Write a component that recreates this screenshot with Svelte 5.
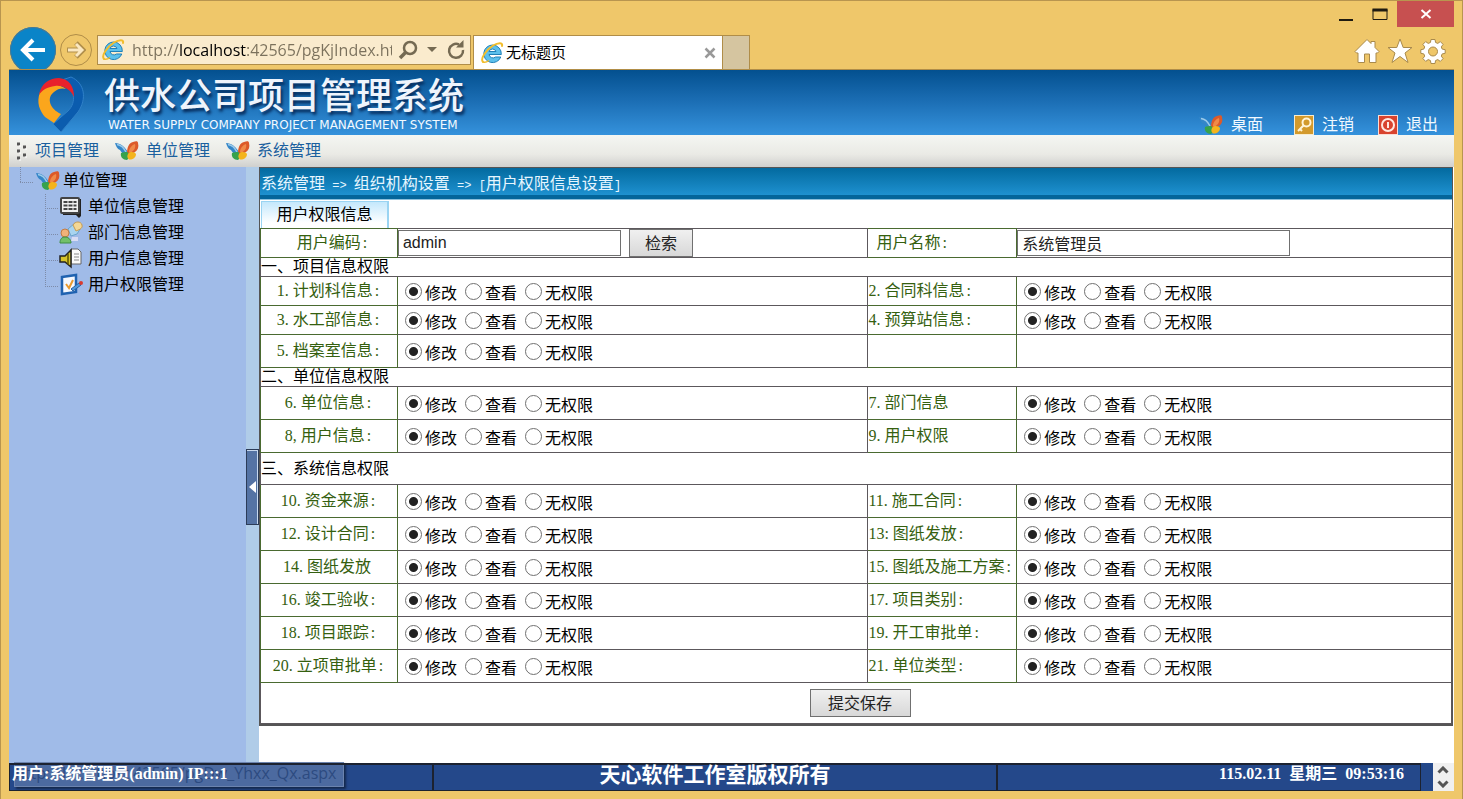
<script>
  const menus = ["项目管理", "单位管理", "系统管理"];

  const treeItems = [
    { icon: "card", text: "单位信息管理" },
    { icon: "people", text: "部门信息管理" },
    { icon: "speaker", text: "用户信息管理" },
    { icon: "edit", text: "用户权限管理" },
  ];

  const levels = ["修改", "查看", "无权限"];

  // each row holds a left and a right permission: [number, label]
  const sections = [
    {
      title: "一、项目信息权限",
      rows: [
        { size: "short", items: [["1.", "计划科信息", ":"], ["2.", "合同科信息", ":"]] },
        { size: "short", items: [["3.", "水工部信息", ":"], ["4.", "预算站信息", ":"]] },
        { size: "tall", items: [["5.", "档案室信息", ":"], null] },
      ],
    },
    {
      title: "二、单位信息权限",
      rows: [
        { size: "tall", items: [["6.", "单位信息", ":"], ["7.", "部门信息", ""]] },
        { size: "tall", items: [["8,", "用户信息", ":"], ["9.", "用户权限", ""]] },
      ],
    },
    {
      title: "三、系统信息权限",
      roomy: true,
      rows: [
        { size: "tall", items: [["10.", "资金来源", ":"], ["11.", "施工合同", ":"]] },
        { size: "tall", items: [["12.", "设计合同", ":"], ["13:", "图纸发放", ":"]] },
        { size: "tall", items: [["14.", "图纸发放", ""], ["15.", "图纸及施工方案", ":"]] },
        { size: "tall", items: [["16.", "竣工验收", ":"], ["17.", "项目类别", ":"]] },
        { size: "tall", items: [["18.", "项目跟踪", ":"], ["19.", "开工审批单", ":"]] },
        { size: "tall", items: [["20.", "立项审批单", ":"], ["21.", "单位类型", ":"]] },
      ],
    },
  ];

  let address = $state("http://localhost:42565/pgKjIndex.htm");
  let userCode = $state("admin");
  let userName = $state("系统管理员");
  let granted = $state({});

  for (const section of sections) {
    for (const row of section.rows) {
      for (const item of row.items) {
        if (item) granted[parseInt(item[0])] = "修改";
      }
    }
  }
</script>

{#snippet ieLogo()}
  <svg class="ie-logo" viewBox="0 0 24 24" aria-hidden="true">
    <path d="M12.500 4a8.800 8.800 0 1 0 8.300 12h-5.300a4 4 0 0 1-6.500-2.500h12.300a8.800 8.800 0 0 0-8.800-9.500zM9 10.500a3.700 3.700 0 0 1 7 0z" fill="#5cc0ec" stroke="#2080b8" stroke-width="1" />
    <path d="M3 21C0 18 6 9 13 4.500C18 1.500 23 1 22 5" fill="none" stroke="#f2bd2c" stroke-width="2" stroke-linecap="round" />
    <path d="M3 21c2 1 4 0 6-1.500" fill="none" stroke="#f2bd2c" stroke-width="1.500" />
  </svg>
{/snippet}

{#snippet butterfly()}
  <svg class="butterfly" viewBox="0 0 24 20" aria-hidden="true">
    <path d="M0 2C5 2 11 6 13 12L11 14C8 13 6 11 5 9C2 8 1 5 0 2z" fill="#3486c8" />
    <path d="M2 3.500C6 4 9 7 11 11" fill="none" stroke="#9ccbea" stroke-width="1.500" />
    <path d="M12 12C12 6 14 2 18 1C21 0 23 0 23 2C24 6 23 9 20 11L14 14z" fill="#dc5a2a" />
    <path d="M14 11C14 7 17 4 20 3C21 7 19 10 15 12z" fill="#f08a48" />
    <path d="M12 11C15 12 15 17 12 19C8 19 5 16 6 12C8 11 10 11 12 11z" fill="#37a24c" />
    <path d="M13 13C15 10 20 11 21 13C21 17 17 19 14 18.500C12 17 12 15 13 13z" fill="#f4b41c" />
  </svg>
{/snippet}

{#snippet treeIcon(name)}
  <svg class="tree-icon" viewBox="0 0 24 24" aria-hidden="true">
    {#if name === "card"}
      <path d="M4 4h18v17l-2 2-3-3H4z" fill="#222" />
      <rect x="2" y="3" width="18" height="15" rx="1" fill="#f0f0f0" stroke="#444" stroke-width="2" />
      <path d="M4.500 7h13M4.500 10.500h13M4.500 14h13" stroke="#444" stroke-width="2" stroke-dasharray="4 1" />
    {:else if name === "people"}
      <path d="M9 8l7-6 7 3-5 8-6 2z" fill="#a8d4f0" stroke="#6aa4cc" />
      <path d="M14 4c2-4 8-4 9 0s-4 5-6 6z" fill="#f3d795" stroke="#c79a50" />
      <path d="M13 16h6v4h-7z" fill="#d8dcf4" />
      <circle cx="6" cy="12" r="4" fill="#f0b27a" stroke="#c27c42" />
      <path d="M1 22c0-4 2-6 5-6s6 2 6 6z" fill="#72c06a" stroke="#3e8e42" />
    {:else if name === "speaker"}
      <path d="M12 2h7l3 3v12H12z" fill="#fafafa" stroke="#666" />
      <path d="M15 7h5M15 10h5M15 13h5" stroke="#888" />
      <path d="M1 9h5l6-6v17l-6-5H1z" fill="#d6c32a" stroke="#222" stroke-width="1.500" />
      <path d="M9 7v11" stroke="#5a5200" stroke-width="1.500" />
    {:else}
      <path d="M3 4l14-2v17L3 21z" fill="#f4f8ff" stroke="#1f62b0" stroke-width="2.500" />
      <path d="M7 11l3 4 4-8" fill="none" stroke="#e89a30" stroke-width="2" />
      <path d="M12 16l8-6 2 2-8 6z" fill="#4f9ae0" stroke="#2860a0" />
      <circle cx="22" cy="10" r="2" fill="#d83a30" />
    {/if}
  </svg>
{/snippet}

{#snippet permission(item)}
  {#if item}
    <div class="choices" role="radiogroup" aria-label={item[1]}>
      {#each levels as level}
        <label class="choice">
          <input
            type="radio"
            name="perm-{parseInt(item[0])}"
            value={level}
            bind:group={granted[parseInt(item[0])]}
          />
          <span>{level}</span>
        </label>
      {/each}
    </div>
  {/if}
{/snippet}

{#snippet caption(item)}
  {#if item}<span class="num">{item[0]}</span>{item[1]}<span class="colon">{item[2]}</span>{/if}
{/snippet}

<div class="window">
  <!-- Browser frame -->
  <div class="titlebar">
    <button class="frame-btn" aria-label="最小化">
      <svg width="16" height="16" viewBox="0 0 16 16"><path d="M1 14h14" stroke="#1e1a10" stroke-width="2" /></svg>
    </button>
    <button class="frame-btn" aria-label="最大化">
      <svg width="16" height="16" viewBox="0 0 16 16"><path d="M1 3.500h14v10H1z" fill="none" stroke="#1e1a10" /><path d="M0.500 4h15" stroke="#1e1a10" stroke-width="3" /></svg>
    </button>
    <button class="frame-btn close" aria-label="关闭">
      <svg width="12" height="12" viewBox="0 0 12 12"><path d="M1.500 2l9 8M10.500 2l-9 8" stroke="#fff" stroke-width="2" /></svg>
    </button>
  </div>

  <div class="navbar">
    <button class="back" aria-label="后退">
      <svg width="28" height="28" viewBox="0 0 28 28"><path d="M26 14H5M14 4L4 14l10 10" fill="none" stroke="#fff" stroke-width="4" /></svg>
    </button>
    <button class="forward" aria-label="前进">
      <svg width="20" height="20" viewBox="0 0 20 20"><path d="M1 10h15M10 3l7 7-7 7" fill="none" stroke="#b08f4c" stroke-width="5" /><path d="M2 10h14M10 4l6 6-6 6" fill="none" stroke="#fbe8c0" stroke-width="3" /></svg>
    </button>
    <div class="address">
      {@render ieLogo()}
      <input class="url" type="text" aria-label="地址" bind:value={address} />
      <button aria-label="搜索">
        <svg width="20" height="20" viewBox="0 0 20 20"><circle cx="12" cy="8" r="6" fill="none" stroke="#756a52" stroke-width="2.500" /><path d="M8 12l-6 6" stroke="#756a52" stroke-width="3.500" /></svg>
      </button>
      <button class="caret" aria-label="显示地址列表">
        <svg width="10" height="6" viewBox="0 0 10 6"><path d="M0 0h10L5 5z" fill="#756a52" /></svg>
      </button>
      <button aria-label="刷新">
        <svg width="20" height="20" viewBox="0 0 20 20"><path d="M17 10a7 7 0 1 1-4-5.500" fill="none" stroke="#756a52" stroke-width="2.500" /><path d="M10 7.500h7.500V0z" fill="#756a52" /></svg>
      </button>
    </div>
    <div class="page-tab">
      {@render ieLogo()}
      <span>无标题页</span>
      <button aria-label="关闭标签页">
        <svg width="12" height="12" viewBox="0 0 12 12"><path d="M1.500 1.500l9 9M10.500 1.500l-9 9" stroke="#999" stroke-width="2.500" /></svg>
      </button>
    </div>
    <button class="new-tab" aria-label="新建标签页"></button>
    <div class="browser-tools">
      <button aria-label="主页">
        <svg width="26" height="26" viewBox="0 0 26 26"><path d="M13 1.500l4 4V3.500h4v6l4 4-1.500 1.500H22v9.500h-6.500V16h-5v8.500H4V15H2.500L1 13.500z" fill="#fff" stroke="#a98a4c" /></svg>
      </button>
      <button aria-label="收藏夹">
        <svg width="26" height="26" viewBox="0 0 26 26"><path d="M13 1l3.200 8.500H25l-7 5.500 3 9.500-8-6-8 6 3-9.500-7-5.500h8.800z" fill="#fff" stroke="#a98a4c" /></svg>
      </button>
      <button aria-label="工具">
        <svg width="26" height="26" viewBox="0 0 26 26">
          <path d="M11 1.500h4l.6 3 2.200.9 2.500-1.800 2.800 2.800-1.800 2.500.9 2.200 3 .6v3.600l-3 .6-.9 2.200 1.800 2.500-2.800 2.800-2.500-1.800-2.200.9-.6 3h-4l-.6-3-2.200-.9-2.500 1.800-2.800-2.800 1.800-2.500-.9-2.200-3-.6v-3.600l3-.6.9-2.200-1.800-2.500 2.800-2.800 2.500 1.800 2.200-.9z" fill="#fff" stroke="#a98a4c" />
          <circle cx="13" cy="13.500" r="4.500" fill="#efc76a" stroke="#a98a4c" />
        </svg>
      </button>
    </div>
  </div>

  <div class="page">
    <header class="banner">
      <svg class="logo" viewBox="0 0 52 60" aria-hidden="true">
        <path d="M36 3C50 9 52 25 43 38L26 58L18 50L33 37C42 28 40 14 27 6z" fill="#0b5cae" stroke="#2f80c8" />
        <path d="M5 18C1 29 5 37 10 43L19 49L26 40C15 35 11 24 19 18C23 14 28 14 31 15C22 8 12 9 5 18z" fill="#fba61c" />
        <path d="M4 21C6 9 15 4 24 4C34 5 39 12 39 23C35 15 28 11 20 12C12 13 7 16 4 21z" fill="#e8222c" />
      </svg>
      <div class="brand">
        <h1>供水公司项目管理系统</h1>
        <p>WATER SUPPLY COMPANY PROJECT MANAGEMENT SYSTEM</p>
      </div>
      <nav class="quick">
        <a href="#desktop">{@render butterfly()}桌面</a>
        <a href="#logout">
          <svg class="badge" viewBox="0 0 20 20" aria-hidden="true">
            <rect x="0.500" y="0.500" width="19" height="19" fill="#d39a2c" stroke="#f8ecd0" />
            <circle cx="12.500" cy="7.500" r="4" fill="none" stroke="#fff4d8" stroke-width="2" />
            <path d="M10 10l-6 6M6 14l2 2" stroke="#fff4d8" stroke-width="2" />
          </svg>注销</a>
        <a href="#exit">
          <svg class="badge" viewBox="0 0 20 20" aria-hidden="true">
            <rect x="0.500" y="0.500" width="19" height="19" fill="#d8432e" stroke="#fbdcd4" />
            <circle cx="10" cy="10" r="6" fill="none" stroke="#ffe8e0" stroke-width="2" />
            <path d="M10 7v6" stroke="#ffe8e0" stroke-width="2" />
          </svg>退出</a>
      </nav>
    </header>

    <nav class="menubar">
      <svg class="grip" viewBox="0 0 10 20" aria-hidden="true">
        <path d="M0 3h3M0 10h3M0 17h3M6 6h3M6 14h3" stroke="#555" stroke-width="3" />
        <path d="M2 5h2M2 12h2M2 19h2M8 8h2M8 16h2" stroke="#fff" />
      </svg>
      {#each menus as menu, i}
        <a href="#menu{i}">{#if i > 0}{@render butterfly()}{/if}{menu}</a>
      {/each}
    </nav>

    <div class="body">
      <aside class="sidebar">
        <a class="tree-root" href="#unit">{@render butterfly()}单位管理</a>
        <ul>
          {#each treeItems as item}
            <li><a href="#{item.icon}">{@render treeIcon(item.icon)}{item.text}</a></li>
          {/each}
        </ul>
      </aside>
      <div class="splitter">
        <button aria-label="收起">
          <svg width="7" height="12" viewBox="0 0 7 12"><path d="M7 0v12L0 6z" fill="#fff" /></svg>
        </button>
      </div>

      <main>
        <form class="panel" onsubmit={(e) => e.preventDefault()}>
          <div class="crumbs">
            系统管理<span>&nbsp;=&gt;&nbsp;</span>组织机构设置<span>&nbsp;=&gt;&nbsp;[</span>用户权限信息设置<span>]</span>
          </div>
          <div class="tabs"><button type="button">用户权限信息</button></div>
          <table>
            <colgroup>
              <col class="c-name" /><col class="c-left" /><col class="c-name2" /><col />
            </colgroup>
            <tbody>
              <tr class="short">
                <th><label class="inset" for="code">用户编码<span class="colon">:</span></label></th>
                <td>
                  <div class="fields">
                    <input id="code" class="code" type="text" bind:value={userCode} />
                    <button type="button" class="btn">检索</button>
                  </div>
                </td>
                <th class="right"><label class="inset" for="name">用户名称<span class="colon">:</span></label></th>
                <td>
                  <div class="fields">
                    <input id="name" class="name" type="text" bind:value={userName} />
                  </div>
                </td>
              </tr>
              {#each sections as section}
                <tr class="section" class:roomy={section.roomy}>
                  <td colspan="4">{section.title}</td>
                </tr>
                {#each section.rows as row}
                  <tr class={row.size}>
                    <th>{@render caption(row.items[0])}</th>
                    <td>{@render permission(row.items[0])}</td>
                    <th class="right">{@render caption(row.items[1])}</th>
                    <td>{@render permission(row.items[1])}</td>
                  </tr>
                {/each}
              {/each}
              <tr class="actions">
                <td colspan="4"><button type="submit" class="btn save">提交保存</button></td>
              </tr>
            </tbody>
          </table>
        </form>
      </main>
    </div>

    <footer>
      <div class="cell user">用户:系统管理员(admin) IP:::1</div>
      <div class="cell owner">天心软件工作室版权所有</div>
      <div class="cell clock"><span>115.02.11</span><span>星期三</span><span>09:53:16</span></div>
      <div class="scroller">
        <button aria-label="向上"><svg width="12" height="8" viewBox="0 0 12 8"><path d="M1.500 6.500L6 2l4.500 4.500" fill="none" stroke="#555" stroke-width="3" /></svg></button>
        <button aria-label="向下"><svg width="12" height="8" viewBox="0 0 12 8"><path d="M1.500 1.500L6 6l4.500-4.500" fill="none" stroke="#555" stroke-width="3" /></svg></button>
      </div>
      <div class="link-status">http://localhost:42565/pgDw_Yhxx_Qx.aspx</div>
    </footer>
  </div>
</div>

<style>
  :global(body) {
    margin: 0;
  }

  .window {
    box-sizing: border-box;
    display: flex;
    flex-direction: column;
    min-height: 100vh;
    padding: 0 8px 8px;
    border: 1px solid #b8954f;
    background: #efc76a;
    font-family: "Liberation Sans", "Noto Sans CJK SC", sans-serif;
    font-size: 16px;
    line-height: 18px;
    color: #000;
  }

  button {
    display: flex;
    align-items: center;
    justify-content: center;
    padding: 0;
    border: none;
    background: none;
    font: inherit;
    color: inherit;
  }

  a {
    color: inherit;
    text-decoration: none;
  }

  svg {
    flex: none;
  }

  /* Browser frame */
  .titlebar {
    display: flex;
    justify-content: flex-end;
    height: 26px;
  }

  .frame-btn {
    width: 34px;
  }

  .frame-btn.close {
    width: 57px;
    background: #c75050;
  }

  .navbar {
    display: flex;
    align-items: flex-start;
    height: 42px;
    overflow: hidden;
    border-bottom: 1px solid #b08d48;
  }

  .back {
    flex: none;
    width: 46px;
    height: 46px;
    margin-left: 1px;
    border-radius: 50%;
    background: #0a84c8;
    box-shadow: inset 0 0 0 1px #4c7890;
  }

  .forward {
    flex: none;
    width: 32px;
    height: 32px;
    margin: 7px 5px 0 4px;
    border: 1px solid #b08d48;
    border-radius: 50%;
  }

  .address {
    display: flex;
    align-items: center;
    box-sizing: border-box;
    width: 374px;
    height: 30px;
    margin: 8px 2px 0 0;
    padding: 0 2px 0 3px;
    border: 1px solid #b08d48;
    background: #faebcd;
  }

  .ie-logo {
    width: 24px;
    height: 24px;
  }

  .url {
    flex: 1;
    min-width: 0;
    margin-left: 7px;
    padding: 0;
    border: none;
    outline: none;
    font-family: "Open Sans", sans-serif;
    font-size: 16px;
    color: transparent;
    background: linear-gradient(90deg, #7b715c 48px, #000 48px, #000 115px, #7b715c 115px);
    -webkit-background-clip: text;
    background-clip: text;
  }

  .address button {
    width: 24px;
    margin-left: 4px;
  }

  .address .caret {
    width: 16px;
  }

  .page-tab {
    display: flex;
    align-items: center;
    box-sizing: border-box;
    width: 250px;
    height: 34px;
    margin-top: 8px;
    padding: 0 6px;
    border: 1px solid #b08d48;
    border-bottom: none;
    background: #fff;
    font-size: 15px;
  }

  .page-tab span {
    flex: 1;
    margin-left: 2px;
  }

  .new-tab {
    box-sizing: border-box;
    width: 27px;
    height: 34px;
    margin-top: 8px;
    border: 1px solid #b08d48;
    border-width: 1px 1px 0 0;
    background: #d5c5a0;
  }

  .browser-tools {
    display: flex;
    gap: 7px;
    margin: 11px 8px 0 auto;
  }

  /* Page */
  .page {
    display: flex;
    flex: 1;
    flex-direction: column;
  }

  .banner {
    display: flex;
    height: 65px;
    background: linear-gradient(#03508f, #1a6cb2 45%, #3592dc);
    color: #f2f9ff;
  }

  .logo {
    width: 52px;
    height: 60px;
    margin: 4px 17px 0 26px;
  }

  .brand h1 {
    margin: 6px 0 0;
    font-size: 36px;
    font-weight: 500;
    line-height: 42px;
    color: #eef4fc;
    text-shadow: 2px 3px 3px #062c5c;
  }

  .brand p {
    margin: 0 0 0 4px;
    font-family: "DejaVu Sans", sans-serif;
    font-size: 12px;
    line-height: 14px;
  }

  .quick {
    display: flex;
    align-items: flex-end;
    gap: 32px;
    margin: 0 16px 0 auto;
  }

  .quick a {
    display: flex;
    align-items: center;
    gap: 8px;
    height: 20px;
  }

  .quick a + a {
    margin-left: -1px;
  }

  .quick a:last-child {
    margin-left: -8px;
  }

  .badge {
    width: 20px;
    height: 20px;
  }

  .butterfly {
    width: 24px;
    height: 20px;
  }

  .menubar {
    display: flex;
    align-items: center;
    gap: 16px;
    height: 32px;
    padding-left: 8px;
    background: linear-gradient(#f4f6f2, #eaeae5 60%, #d0d0ce);
    color: #1a5f9e;
  }

  .menubar a {
    display: flex;
    align-items: center;
    gap: 7px;
  }

  .grip {
    width: 10px;
    height: 20px;
    margin-right: -8px;
  }

  .body {
    display: flex;
    flex: 1;
  }

  .sidebar {
    flex: none;
    width: 237px;
    background: #a0bbe8;
  }

  .tree-root {
    display: flex;
    align-items: center;
    gap: 3px;
    height: 27px;
    padding-left: 27px;
    background:
      repeating-linear-gradient(90deg, #7d8ba8 0 1px, transparent 1px 2px) 11px 15px / 14px 1px no-repeat,
      repeating-linear-gradient(#7d8ba8 0 1px, transparent 1px 2px) 11px 0 / 1px 15px no-repeat;
  }

  .sidebar ul {
    margin: 0;
    padding: 0 0 0 36px;
    list-style: none;
  }

  .sidebar li {
    background:
      repeating-linear-gradient(90deg, #7d8ba8 0 1px, transparent 1px 2px) 0 14px / 14px 1px no-repeat,
      repeating-linear-gradient(#7d8ba8 0 1px, transparent 1px 2px) 0 0 / 1px 100% no-repeat;
  }

  .sidebar li:last-child {
    background:
      repeating-linear-gradient(90deg, #7d8ba8 0 1px, transparent 1px 2px) 0 14px / 14px 1px no-repeat,
      repeating-linear-gradient(#7d8ba8 0 1px, transparent 1px 2px) 0 0 / 1px 14px no-repeat;
  }

  .sidebar li a {
    display: flex;
    align-items: center;
    gap: 5px;
    height: 26px;
    padding-left: 14px;
  }

  .tree-icon {
    width: 24px;
    height: 24px;
  }

  .splitter {
    display: flex;
    flex: none;
    align-items: center;
    width: 13px;
    background: #b0cce8;
  }

  .splitter button {
    box-sizing: border-box;
    width: 13px;
    height: 76px;
    margin-top: 44px;
    border: 1px solid #2c3c58;
    background: #5573a4;
    box-shadow: inset -1px 1px 0 #c8d8ee;
  }

  main {
    flex: 1;
    min-width: 0;
    padding-bottom: 37px;
    background: #fff;
  }

  .panel {
    margin-right: 1px;
    border: 1px solid #555;
    border-bottom-width: 2px;
  }

  .crumbs {
    height: 27px;
    padding-left: 1px;
    border-bottom: 4px solid #03659a;
    box-shadow: 0 1px 0 #8cc0dc;
    background: linear-gradient(#036a9f, #1e91d0);
    line-height: 31px;
    color: #e6f6ff;
  }

  .crumbs span {
    font-family: "Liberation Mono", monospace;
    font-size: 12px;
  }

  .tabs {
    display: flex;
    padding: 2px 0 0 1px;
  }

  .tabs button {
    width: 128px;
    height: 27px;
    border: 1px solid #9ad4f2;
    border-width: 1px 2px 0 1px;
    background: linear-gradient(#c4e8fc, #fff 80%);
  }

  table {
    width: 100%;
    border-collapse: collapse;
    table-layout: fixed;
  }

  .c-name {
    width: 11.5%;
  }

  .c-left {
    width: 39.5%;
  }

  .c-name2 {
    width: 12.5%;
  }

  th,
  td {
    padding: 0;
    border: 1px solid #5c585c;
    font-weight: 400;
    text-align: left;
  }

  th {
    border-color: #4a6a30;
    color: #35600f;
    text-align: center;
    white-space: nowrap;
  }

  th.right {
    text-align: left;
  }

  .inset {
    margin-left: 8px;
  }

  .num,
  .colon {
    font-family: "Liberation Serif", serif;
  }

  .num {
    margin-right: 4px;
  }

  .colon {
    margin: 0 2px;
  }

  .short {
    height: 29px;
  }

  .tall {
    height: 33px;
  }

  .section {
    height: 19px;
  }

  .roomy {
    height: 32px;
  }

  .actions {
    height: 41px;
  }

  .fields {
    display: flex;
    align-items: center;
    gap: 8px;
    height: 28px;
  }

  .fields input {
    box-sizing: border-box;
    height: 26px;
    padding: 0 4px;
    border: 1px solid #707070;
    font: inherit;
    color: #222;
  }

  .code {
    width: 223px;
  }

  .name {
    width: 273px;
  }

  .btn {
    box-sizing: border-box;
    width: 64px;
    height: 28px;
    padding-top: 2px;
    border: 1px solid #707070;
    background: linear-gradient(#f0f0f0, #d8d8d8);
    color: #222;
  }

  .actions td {
    padding-left: 8px;
  }

  .save {
    width: 101px;
    margin: 0 auto;
  }

  .choices {
    display: flex;
    gap: 8px;
    padding-left: 7px;
  }

  .choice {
    display: flex;
    align-items: center;
    gap: 3px;
  }

  .choice span {
    padding-top: 6px;
  }

  .choice input {
    appearance: none;
    width: 17px;
    height: 17px;
    margin: 0;
    border: 1px solid #707070;
    border-radius: 50%;
    background: #fff;
  }

  .choice input:checked {
    background: radial-gradient(circle, #222 4px, #fff 5px);
  }

  /* Status bar */
  footer {
    position: relative;
    display: grid;
    grid-template-columns: 3fr 4fr 3fr 33px;
    height: 28px;
    background: #24488a;
    color: #fff;
    font-family: "Liberation Serif", "Noto Sans CJK SC", serif;
    font-weight: 700;
  }

  .cell {
    border: 1px solid #1c2230;
    border-top-width: 2px;
    line-height: 17px;
    white-space: nowrap;
  }

  .user {
    z-index: 1;
    padding-left: 2px;
  }

  .owner {
    font-size: 21px;
    line-height: 21px;
    text-align: center;
  }

  .clock {
    display: flex;
    justify-content: flex-end;
    gap: 8px;
    padding-right: 16px;
  }

  .scroller {
    display: flex;
    flex-direction: column;
    justify-content: space-around;
    align-items: center;
    margin-left: 12px;
    background: #f0f0f0;
  }

  .link-status {
    position: absolute;
    left: 5px;
    top: -1px;
    box-sizing: border-box;
    height: 25px;
    padding-right: 6px;
    border: 1px solid #6b83ae;
    background: #4c6aa0;
    box-shadow: 2px 2px 2px #14284e;
    font-family: "Open Sans", sans-serif;
    font-size: 16px;
    font-weight: 400;
    line-height: 20px;
    color: #2c4a80;
  }
</style>
